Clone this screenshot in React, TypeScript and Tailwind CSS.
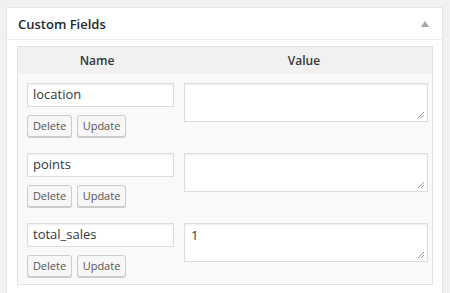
import React from 'react'

const rows = [
  { key: 'location', value: '' },
  { key: 'points', value: '' },
  { key: 'total_sales', value: '1' },
]

function Resizer() {
  return (
    <svg className="absolute right-[2px] bottom-[2px]" width="8" height="8" viewBox="0 0 8 8">
      <path d="M7 1 L1 7 M7 4 L4 7" stroke="#999" strokeWidth="1" />
    </svg>
  )
}

export default function App() {
  return (
    <div
      className="min-h-[293px] bg-[#f1f1f1] pt-[7px] pl-[6px] text-[#23282d]"
      style={{ fontFamily: '"Open Sans", "Noto Sans", sans-serif' }}
    >
      <div className="w-[437px] h-[290px] bg-white border border-[#e5e5e5] shadow-[0_1px_1px_rgba(0,0,0,0.04)]">
        {/* header */}
        <div className="h-[32px] flex items-center justify-between pl-[11px] pr-[13px] pt-[1px] border-b border-[#eeeeee]">
          <h2 className="text-[13px] font-semibold leading-none">Custom Fields</h2>
          <svg width="8" height="6" viewBox="0 0 8 6">
            <path d="M4 0 L8 6 L0 6 Z" fill="#a0a5aa" />
          </svg>
        </div>

        {/* table */}
        <div className="px-[10px] pt-[6px]">
          <div className="border border-[#e1e1e1] bg-[#f9f9f9] w-[416px]">
            <div className="flex h-[27px] bg-[#f1f1f1] text-[12px] font-semibold text-[#32373c] items-center">
              <div className="w-[158px] text-center">Name</div>
              <div className="flex-1 text-center">Value</div>
            </div>
            {rows.map((r) => (
              <div key={r.key} className="flex pt-[9px] pb-[7px]">
                <div className="w-[166px] pl-[9px]">
                  <div className="w-[147px] h-[24px] bg-white border border-[#dddddd] shadow-[inset_0_1px_2px_rgba(0,0,0,0.07)] px-[5px] flex items-center text-[13px] text-[#32373c]">
                    {r.key}
                  </div>
                  <div className="flex gap-[5px] mt-[8px]">
                    <button className="w-[45px] h-[22px] border border-[#cccccc] bg-[#f7f7f7] rounded-[3px] text-[11px] text-[#555555] shadow-[0_1px_0_#cccccc]">
                      Delete
                    </button>
                    <button className="w-[49px] h-[22px] border border-[#cccccc] bg-[#f7f7f7] rounded-[3px] text-[11px] text-[#555555] shadow-[0_1px_0_#cccccc]">
                      Update
                    </button>
                  </div>
                </div>
                <div className="relative w-[244px] h-[39px] bg-white border border-[#dddddd] shadow-[inset_0_1px_2px_rgba(0,0,0,0.07)] px-[6px] pt-[2px] text-[13px] text-[#32373c]">
                  {r.value}
                  <Resizer />
                </div>
              </div>
            ))}
          </div>
        </div>
      </div>
    </div>
  )
}
